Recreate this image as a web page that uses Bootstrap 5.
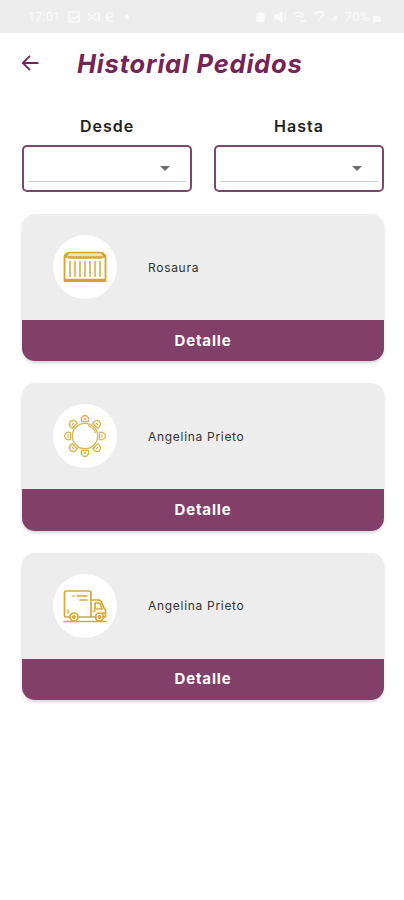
<!DOCTYPE html>
<html lang="es">
<head>
<meta charset="utf-8">
<meta name="viewport" content="width=device-width, initial-scale=1">
<title>Historial Pedidos</title>
<link href="https://cdn.jsdelivr.net/npm/bootstrap@5.3.0/dist/css/bootstrap.min.css" rel="stylesheet">
<style>
body{font-family:Inter,"Open Sans",sans-serif;min-height:900px;background:#fff;overflow:hidden}
.status{height:33px;background:#ededed;color:#f9f9f9;padding:0 23px 0 28px;font:13px/33px Roboto,sans-serif}
.status svg{display:block}
.topbar{height:61px;padding-left:21px}
.title{font-size:25.5px;line-height:30px;font-weight:700;font-style:italic;color:#742457;letter-spacing:.8px;margin-left:38px}
.filters{padding:0 20px 0 22px;column-gap:22px;margin-top:22px}
.filter-col{flex:1 1 0}
.filter-label{font-size:16px;line-height:20px;font-weight:600;color:#222;letter-spacing:1px;margin-bottom:9px}
.picker{height:47px;border:2px solid #80466a;border-radius:5px;padding:0 4px 8px;background:#fff}
.picker-line{height:100%;border-bottom:1.5px solid #cfcfd2;padding:9px 16px 0 0}
.orders{padding:0 20px 0 22px;margin-top:22px;gap:22px}
.order{height:147.3px;border-radius:13px;background:#ededed;overflow:hidden;box-shadow:0 2px 3px rgba(60,60,80,.2)}
.order-info{height:106px;padding-left:31px;gap:31px}
.order-icon{width:64px;height:64px;background:#fff}
.order-name{font-size:12px;color:#333;letter-spacing:.7px;padding-top:1px}
.order-btn{background:#813f69;color:#fff;font-size:15px;font-weight:700;line-height:20px;border-radius:0;letter-spacing:.85px}
.order-btn:hover{background:#742457;color:#fff}
</style>
<script src="https://cdn.jsdelivr.net/npm/bootstrap@5.3.0/dist/js/bootstrap.bundle.min.js"></script>
</head>
<body>
<div class="status d-flex align-items-center justify-content-between">
  <div class="d-flex align-items-center gap-2"><span>17:01</span>
    <svg width="66" height="14" fill="none" stroke="#f9f9f9" stroke-width="1.4"><path d="M1 2h10v10H1zM2 11l3-4 2 2 2-3 2 3M20 3l4 4-4 4M29 3l-5 4 5 4M31 3v8M45 4a4 4 0 1 0 0 6M39 8l6-2"/><circle cx="59" cy="7" r="1.4" fill="#f9f9f9"/></svg>
  </div>
  <div class="d-flex align-items-center">
    <svg class="me-1" width="86" height="14" fill="none" stroke="#f9f9f9" stroke-width="1.3"><path d="M2 4h7v7H2zM3 3h5" fill="#f9f9f9"/><path d="M20 5h3l4-3v10l-4-3h-3z" fill="#f9f9f9"/><path d="M30 3v8M39 4c4-3 7-2 10 1M41 7c3-2 5-1 7 1M45 11h6M59 4c4-3 8-3 10 0l-6 7M77 10l4-4v5"/></svg>
    <span>70%</span>
    <svg class="ms-1" width="8" height="14"><path d="M0 6h5l3 2v4H0z" fill="#f9f9f9"/></svg>
  </div>
</div>
<header class="topbar d-flex align-items-center">
  <svg width="18" height="17" viewBox="0 0 18 17" fill="none" stroke="#742457" stroke-width="1.8"><path d="M17.500 8H2M9 .8 1.800 8 9 15.200"/></svg>
  <h1 class="title mb-0 text-nowrap">Historial Pedidos</h1>
</header>
<main>
  <section class="filters d-flex">
    <div class="filter-col"><div class="filter-label text-center">Desde</div>
      <div class="picker" role="button"><div class="picker-line d-flex align-items-center justify-content-end"><svg width="10" height="5"><path d="M0 0h10L5 5z" fill="#6d6d6d"/></svg></div></div></div>
    <div class="filter-col"><div class="filter-label text-center">Hasta</div>
      <div class="picker" role="button"><div class="picker-line d-flex align-items-center justify-content-end"><svg width="10" height="5"><path d="M0 0h10L5 5z" fill="#6d6d6d"/></svg></div></div></div>
  </section>
  <section class="orders d-flex flex-column">
    <article class="order d-flex flex-column">
      <div class="order-info d-flex align-items-center">
        <div class="order-icon rounded-circle d-flex align-items-center justify-content-center">
          <svg width="44" height="32" viewBox="0 0 44 32" fill="none" stroke="#d6a42c" stroke-linejoin="round"><path d="M6 1.500h32l3.500 4.500H2.500z" fill="#f4e3b8" stroke-width="1.300"/><path d="M5 1.500 1.500 5v25h41V5L39 1.500" stroke-width="1.800"/><path d="M5 7h34M1.500 28.500h41" stroke-width="1.300"/><path d="M7 10v16M12 10v16M17 10v16M22 10v16M27 10v16M32 10v16M37 10v16" stroke-width="1.800" stroke="#dfb75c"/></svg>
        </div>
        <div class="order-name">Rosaura</div>
      </div>
      <button class="order-btn btn border-0 flex-fill p-0">Detalle</button>
    </article>
    <article class="order d-flex flex-column">
      <div class="order-info d-flex align-items-center">
        <div class="order-icon rounded-circle d-flex align-items-center justify-content-center">
          <svg width="44" height="44" viewBox="-22 -22 44 44" fill="none" stroke="#dcb24d" stroke-width="1.300"><defs><g id="seat"><path d="M-3.500-14.500c-1-3 1-6 3.500-6s4.500 3 3.500 6zM-1.500-17h3"/></g></defs><circle r="12.700"/><path d="M3-10.500a11 11 0 0 1 7.500 7.500"/><use href="#seat"/><use href="#seat" transform="rotate(45)"/><use href="#seat" transform="rotate(90)"/><use href="#seat" transform="rotate(135)"/><use href="#seat" transform="rotate(180)"/><use href="#seat" transform="rotate(225)"/><use href="#seat" transform="rotate(270)"/><use href="#seat" transform="rotate(315)"/></svg>
        </div>
        <div class="order-name">Angelina Prieto</div>
      </div>
      <button class="order-btn btn border-0 flex-fill p-0">Detalle</button>
    </article>
    <article class="order d-flex flex-column">
      <div class="order-info d-flex align-items-center">
        <div class="order-icon rounded-circle d-flex align-items-center justify-content-center">
          <svg width="44" height="34" viewBox="0 0 44 34" fill="none" stroke="#dca637" stroke-width="1.700" stroke-linejoin="round" stroke-linecap="round"><path d="M7 28H3.500Q1.500 28 1.500 26V4Q1.500 2 3.500 2H26q2 0 2 2v24M15 28h18M28 11h8q2 0 3 3l2 5 1.500 2v7H40M32 14h5l2 6h-7zM1 32.500h42"/><path d="M10 7h1M14 7h10M17 11h7M5 21v3M39 24h3M30 22h2" stroke-width="1.500"/><circle cx="11" cy="28" r="4"/><circle cx="11" cy="28" r="1.200"/><circle cx="36.500" cy="28" r="4"/><circle cx="36.500" cy="28" r="1.200"/></svg>
        </div>
        <div class="order-name">Angelina Prieto</div>
      </div>
      <button class="order-btn btn border-0 flex-fill p-0">Detalle</button>
    </article>
  </section>
</main>
</body>
</html>
